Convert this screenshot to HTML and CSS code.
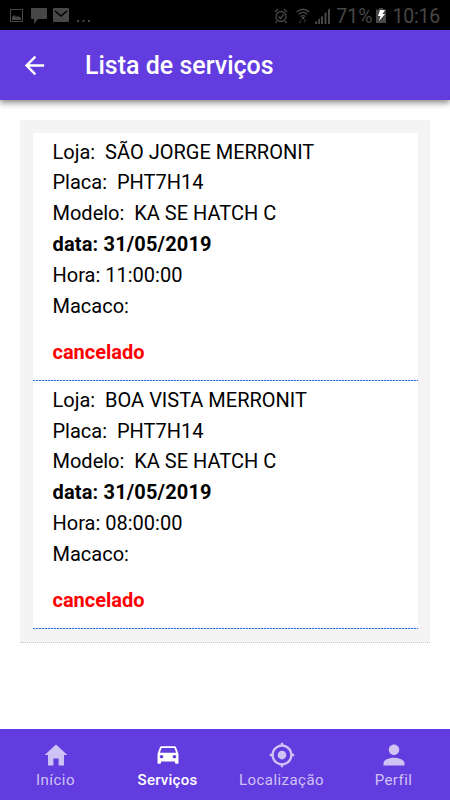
FILE: index.html
```html
<!DOCTYPE html>
<html lang="pt-BR">
<head>
  <meta charset="utf-8">
  <title>Lista de serviços</title>
  <link rel="stylesheet" href="styles.css">
</head>
<body>
  <div class="status-bar">
    <div class="status-left">
      <svg width="13" height="13" viewBox="0 0 13 13"><rect x=".5" y=".5" width="12" height="12" fill="none" stroke="currentColor"/><path d="M2 11V8l2-2 2 2 2-1 3 2v2z" fill="currentColor"/></svg>
      <svg class="chat" width="16" height="16" viewBox="0 0 16 16"><path d="M1 0h14q1 0 1 1v9q0 1-1 1H7l-4 5v-5H1q-1 0-1-1V1q0-1 1-1z" fill="currentColor"/></svg>
      <svg class="mail" width="16" height="14" viewBox="0 0 16 14"><rect width="16" height="14" rx="1" fill="currentColor"/><path d="M2 3l6 5 6-5" fill="none" stroke="#000" stroke-width="1.5"/></svg>
      <svg class="more" width="13" height="3" viewBox="0 0 13 3"><path d="M0 0h2v2H0zM5.500 0h2v2h-2zM11 0h2v2h-2z" fill="currentColor"/></svg>
    </div>
    <div class="status-right">
      <svg class="alarm" width="14" height="16" viewBox="0 0 14 16" fill="none" stroke="currentColor" stroke-width="1.300"><circle cx="7" cy="8.500" r="5"/><path d="M4.500 8.500l2 2 3-4M1 4l3-3M13 4l-3-3M3 13l-1.500 2M11 13l1.500 2"/></svg>
      <svg class="wifi" width="14" height="16" viewBox="0 0 14 16" fill="none" stroke="currentColor" stroke-width="1.300"><path d="M.5 4Q7-1.500 13.500 4M2.500 6.300Q7 2.500 11.500 6.300M4.500 8.600Q7 6.500 9.500 8.600"/><circle cx="7" cy="10" r=".7"/><path d="M4.500 11.500V15M3 13.500L4.500 15M8.500 15v-3.500L10 13" opacity=".5"/></svg>
      <svg class="signal" width="16" height="16" viewBox="0 0 16 16" fill="currentColor"><path d="M0 16v-2l2-1v3zM3 16v-4l2-2v6zM6 16V9l2-1v8zM9.500 16V5l2-1v12zM13 16V2l2-2v16z"/></svg>
      <span class="percent">71%</span>
      <svg class="battery" width="10" height="15" viewBox="0 0 10 15"><path d="M0 1.500h3V0h4v1.500h3V15H0z" fill="#474747"/><path d="M4 2h5L6.500 6H9l-6 7 1.500-5H2z" fill="#fff"/></svg>
      <span class="clock">10:16</span>
    </div>
  </div>

  <header class="header">
    <svg width="29" height="29" viewBox="0 0 512 512"><path d="M427 234.625H167.296l119.702-119.702L256 85 85 256l171 171 29.922-29.924-118.626-119.701H427v-42.750z" fill="currentColor"/></svg>
    <h1>Lista de serviços</h1>
  </header>

  <main class="content">
    <div class="list">
      <div class="item">
        <p>Loja:&nbsp; SÃO JORGE MERRONIT</p>
        <p>Placa:&nbsp; PHT7H14</p>
        <p>Modelo:&nbsp; KA SE HATCH C</p>
        <p class="date">data: 31/05/2019</p>
        <p>Hora: 11:00:00</p>
        <p>Macaco:</p>
        <p class="status">cancelado</p>
      </div>
      <div class="item">
        <p>Loja:&nbsp; BOA VISTA MERRONIT</p>
        <p>Placa:&nbsp; PHT7H14</p>
        <p>Modelo:&nbsp; KA SE HATCH C</p>
        <p class="date">data: 31/05/2019</p>
        <p>Hora: 08:00:00</p>
        <p>Macaco:</p>
        <p class="status">cancelado</p>
      </div>
    </div>
  </main>

  <nav class="tabs">
    <a class="tab">
      <svg width="28" height="28" viewBox="0 0 512 512"><path d="M208 448V320h96v128h97.600V256H464L256 64 48 256h62.400v192z" fill="currentColor"/></svg>
      <span>Início</span>
    </a>
    <a class="tab active">
      <svg width="28" height="28" viewBox="0 0 512 512"><path transform="translate(0 16) scale(21.330 20)" d="M18.920 5.010C18.720 4.420 18.160 4 17.500 4h-11c-.66 0-1.210.42-1.420 1.010L3 11v8c0 .55.45 1 1 1h1c.55 0 1-.45 1-1v-1h12v1c0 .55.45 1 1 1h1c.55 0 1-.45 1-1v-8l-2.080-5.990zM6.500 15c-.83 0-1.500-.67-1.500-1.500S5.670 12 6.500 12s1.500.67 1.500 1.500S7.330 15 6.500 15zm11 0c-.83 0-1.500-.67-1.500-1.500s.67-1.500 1.500-1.500 1.500.67 1.500 1.500-.67 1.500-1.500 1.500zM5 10l1.500-4.500h11L19 10H5z" fill="currentColor"/></svg>
      <span>Serviços</span>
    </a>
    <a class="tab">
      <svg width="28" height="28" viewBox="0 0 512 512"><path d="M256 176c-44.004 0-80.001 36-80.001 80 0 44.004 35.997 80 80.001 80 44.005 0 79.999-35.996 79.999-80 0-44-35.994-80-79.999-80zm190.938 58.667c-9.605-88.531-81.074-160-169.605-169.599V32h-42.666v33.067c-88.531 9.599-160 81.068-169.604 169.599H32v42.667h33.062c9.604 88.531 81.072 160 169.604 169.604V480h42.666v-33.062c88.531-9.604 160-81.073 169.605-169.604H480v-42.667h-33.062zM256 405.333c-82.137 0-149.334-67.198-149.334-149.333 0-82.136 67.197-149.333 149.334-149.333 82.135 0 149.332 67.198 149.332 149.333S338.135 405.333 256 405.333z" fill="currentColor"/></svg>
      <span>Localização</span>
    </a>
    <a class="tab">
      <svg width="28" height="28" viewBox="0 0 512 512"><path d="M256 256c52.805 0 96-43.201 96-96s-43.195-96-96-96-96 43.201-96 96 43.195 96 96 96zm0 48c-63.598 0-192 32.402-192 96v48h384v-48c0-63.598-128.402-96-192-96z" fill="currentColor"/></svg>
      <span>Perfil</span>
    </a>
  </nav>
</body>
</html>
```
FILE: styles.css
```css
* {
  box-sizing: border-box;
}
body {
  font-family: Roboto, sans-serif;
  margin: 0;
  height: 800px;
  display: flex;
  flex-direction: column;
  background-color: #fff;
  overflow: hidden;
}
svg {
  display: block;
  flex: none;
}
h1, p {
  margin: 0;
}
.status-bar {
  height: 30px;
  display: flex;
  justify-content: space-between;
  background-color: #000;
  color: #474747;
}
.status-left {
  display: flex;
  align-items: flex-start;
  padding: 9px 0 0 10px;
}
.chat {
  margin: -1px 0 0 8px;
}
.mail {
  margin: -1px 0 0 6px;
}
.more {
  margin: 11px 0 0 8px;
}
.status-right {
  display: flex;
  align-items: center;
  padding: 1px 10px 0 0;
  font-size: 19.500px;
}
.wifi {
  margin-left: 8px;
}
.signal {
  margin-left: 5px;
}
.percent {
  margin-left: 5px;
  padding-top: 1px;
}
.battery {
  margin-left: 4px;
}
.clock {
  margin-left: 6px;
  padding-top: 1px;
  letter-spacing: -0.200px;
}
.header {
  position: relative;
  height: 70px;
  display: flex;
  align-items: center;
  padding: 1px 0 0 20px;
  background-color: #623cdf;
  color: #fff;
  box-shadow: 0 3px 6px rgba(0, 0, 0, 0.45);
}
.header h1 {
  margin: -1px 0 0 36px;
  font-size: 25px;
  font-weight: 500;
}
.content {
  flex: 1;
  padding: 20px;
}
.list {
  padding: 12.500px;
  background-color: #f4f4f4;
  border-bottom: 1px dotted #c8c8c8;
}
.item {
  height: 248.300px;
  padding: 4px 20px 0;
  background: repeating-linear-gradient(90deg, #2f6fe0 0 2px, #c4d8f6 2px 3px) bottom / 100% 1px no-repeat #fff;
  color: #000;
  font-size: 20px;
  line-height: 30.850px;
}
.date {
  font-weight: 700;
  letter-spacing: 0.160px;
}
.item .status {
  margin-top: 15px;
  color: #f00;
  font-weight: 700;
}
.tabs {
  height: 71px;
  display: flex;
  background-color: #623cdf;
}
.tab {
  flex: 1;
  display: flex;
  flex-direction: column;
  align-items: center;
  padding: 12px 1px 0 0;
  color: #cfc3f6;
  font-size: 15px;
  letter-spacing: 0.450px;
}
.tab span {
  margin-top: 2px;
  line-height: 18px;
}
.tab.active {
  padding-right: 3px;
  color: #fff;
  font-weight: 500;
  letter-spacing: 0.250px;
}
```
